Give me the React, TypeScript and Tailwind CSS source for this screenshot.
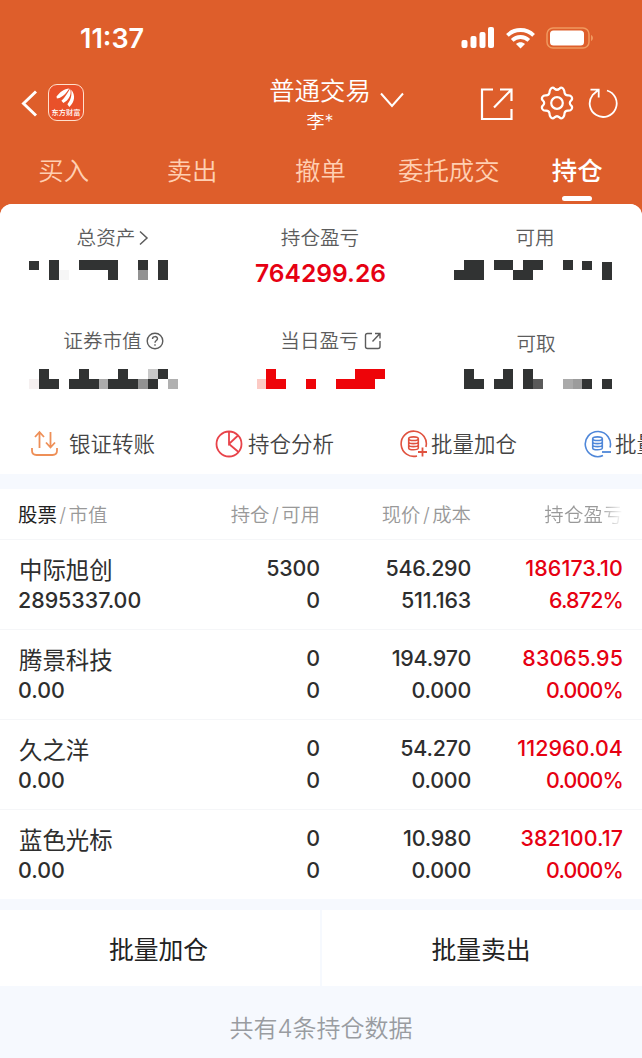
import { ReactNode } from 'react';

// [x, y, width, height, fill]
type Cell = [number, number, number, number, string?];

interface Holding {
  name: string;
  value: string;
  amount: string;
  available: string;
  price: string;
  cost: string;
  profit: string;
  percent: string;
}

const holdings: Holding[] = [
  { name: '中际旭创', value: '2895337.00', amount: '5300', available: '0', price: '546.290', cost: '511.163', profit: '186173.10', percent: '6.872%' },
  { name: '腾景科技', value: '0.00', amount: '0', available: '0', price: '194.970', cost: '0.000', profit: '83065.95', percent: '0.000%' },
  { name: '久之洋', value: '0.00', amount: '0', available: '0', price: '54.270', cost: '0.000', profit: '112960.04', percent: '0.000%' },
  { name: '蓝色光标', value: '0.00', amount: '0', available: '0', price: '10.980', cost: '0.000', profit: '382100.17', percent: '0.000%' },
];

const tabs = ['买入', '卖出', '撤单', '委托成交', '持仓'];

// masked amounts, drawn as coarse blocks
const totalMask: Cell[] = [
  [0, 1, 10, 9], [20, 0, 10, 20], [30, 10, 10, 10, '#f6f6f6'], [50, 0, 39, 10], [79, 10, 10, 10],
  [109, 0, 10, 10], [109, 10, 10, 10, '#929292'], [129, 0, 10, 20],
];
const marketMask: Cell[] = [
  [0, 10, 10, 10, '#f5f0f0'], [10, 0, 10, 20], [20, 10, 10, 10], [40, 10, 30, 10], [50, 0, 10, 10],
  [70, 10, 9, 10, '#ababab'], [79, 10, 30, 10], [89, 0, 10, 10], [109, 10, 10, 10, '#929292'],
  [119, 0, 10, 10, '#c9c9c9'], [119, 10, 10, 10], [129, 0, 10, 10], [139, 10, 10, 10, '#b0b0b0'],
];
const dayMask: Cell[] = [
  [0, 10, 9, 10, '#fccac4'], [9, 0, 10, 20], [19, 10, 10, 10], [49, 10, 10, 10], [79, 10, 39, 10], [98, 0, 30, 10],
];
const usableMask: Cell[] = [
  [0, 10, 30, 10], [10, 0, 20, 10], [40, 0, 19, 10], [59, 10, 20, 10], [69, 0, 20, 10],
  [109, 0, 10, 10], [128, 1, 10, 9], [148, 2, 10, 18],
];
const cashMask: Cell[] = [
  [0, 0, 10, 20], [10, 10, 10, 10], [30, 10, 10, 10], [39, 0, 10, 20], [59, 0, 10, 20], [69, 10, 10, 10, '#5a5a5a'],
  [99, 10, 10, 10, '#aaaaaa'], [109, 10, 9, 10, '#9c9c9c'], [118, 10, 10, 10], [138, 10, 10, 10],
];

function Mask({ cells, width, color = '#313333' }: { cells: Cell[]; width: number; color?: string }) {
  return (
    <svg width={width} height={20} shapeRendering="crispEdges" className="shrink-0">
      {cells.map(([x, y, w, h, fill], i) => (
        <rect key={i} x={x} y={y} width={w} height={h} fill={fill || color} />
      ))}
    </svg>
  );
}

function StatusBar() {
  return (
    <div className="flex h-[76px] items-center justify-between pr-[48px] pl-[80px] text-white">
      <span className="pt-px text-[27px] leading-8 font-semibold">11:37</span>
      <div className="flex items-center gap-[11px]">
        <svg width="34" height="22" viewBox="0 0 34 22" fill="currentColor">
          <rect x="0.5" y="13" width="6" height="8" rx="2" />
          <rect x="9.5" y="9" width="6" height="12" rx="2" />
          <rect x="18.5" y="5" width="6" height="16" rx="2" />
          <rect x="27" y="0" width="6" height="21" rx="2" />
        </svg>
        <svg width="29" height="21" viewBox="0 0 29 21" fill="none" stroke="currentColor" strokeWidth="3.8">
          <path d="M1.4 7.4C8.5 0.2 20.5 0.2 27.6 7.4" />
          <path d="M6.2 12.3C10.8 7.9 18.2 7.9 22.8 12.3" />
          <path d="M14.5 20.6L10 16C12.5 13.8 16.5 13.8 19 16Z" fill="currentColor" stroke="none" />
        </svg>
        <svg width="48" height="22" viewBox="0 0 48 22" fill="none">
          <rect x="1" y="1" width="42" height="20" rx="6" stroke="#f0995f" strokeWidth="1.5" />
          <rect x="4" y="3.5" width="34" height="15" rx="3.5" fill="#fff" />
          <path d="M45 8C47.6 9 47.6 13 45 14Z" fill="#f0995f" />
        </svg>
      </div>
    </div>
  );
}

function NavBar() {
  return (
    <div className="grid h-[66px] grid-cols-[269px_136px_1fr] text-white">
      <div className="flex items-start pt-[8px] pl-[21px]">
        <svg width="17" height="27" viewBox="0 0 17 27" className="mt-[6px]" fill="none" stroke="currentColor" strokeWidth="2.9">
          <path d="M15 1.5L2.5 13.5L15 25.5" />
        </svg>
        <div className="ml-[10px] flex h-[37px] w-9 flex-col items-center rounded-[9px] border border-[#ffe0cc] bg-[#e9512a]">
          <svg width="20" height="20" viewBox="0 0 20 20" className="mt-[3px] shrink-0" fill="#fff">
            <path d="M0.5 8.6C4 3.6 8 1 13.4 0.4C10.6 3.6 8.4 8.9 0.9 10.6Z" />
            <path d="M5.4 12.8C9 9.6 11.2 5.6 14 0.8C16.2 6.2 12.6 12.5 7.4 14.9Z" />
            <path d="M11.4 16.2C14.8 12 16 7.6 15.2 1.8C19.8 7 18.8 14 13.3 19Z" />
          </svg>
          <span className="font-['Noto_Sans_CJK_SC',sans-serif] text-[7.2px] leading-[9px] font-medium whitespace-nowrap">东方财富</span>
        </div>
      </div>
      <div className="flex items-start">
        <div className="w-[102px] text-center">
          <div className="text-[25.4px] leading-[30px] font-[350] whitespace-nowrap">普通交易</div>
          <div className="pt-px text-[18px] leading-[30px] font-[350]">李*</div>
        </div>
        <svg width="24" height="16" viewBox="0 0 24 16" className="mt-4 ml-[9px] shrink-0" fill="none" stroke="currentColor" strokeWidth="2">
          <path d="M1 1.5L12 14L23 1.5" />
        </svg>
      </div>
      <div className="flex items-start justify-end pt-[10px] pr-[23.5px]">
        <svg width="34" height="34" viewBox="0 0 34 34" className="mt-px" fill="none" stroke="currentColor" strokeWidth="2.2">
          <path d="M13 2.5H2V32H31.5V22M20 2.5H31.5V14M31 3L14 20.5" />
        </svg>
        <svg width="36" height="34" viewBox="0 0 36 34" className="ml-[25px]" fill="none" stroke="currentColor" strokeWidth="2.2" strokeLinejoin="round">
          <path d="M11.5 3.2C13 1 14.5 1.6 15.5 2.6C17 4 19 4 20.5 2.6C21.5 1.6 23 1 24.5 3.2C25.5 4.4 25.3 5.2 25.5 6.6C25.8 8.5 27.3 9.4 29.2 9.3C31 9.2 31.8 9.5 32.7 11C33.6 12.8 33.5 13.4 32 14.6C30.4 16 30.4 18 32 19.4C33.5 20.6 33.6 21.2 32.7 23C31.8 24.5 31 24.8 29.2 24.7C27.3 24.6 25.8 25.5 25.5 27.4C25.3 28.8 25.5 29.6 24.5 30.8C23 33 21.5 32.4 20.5 31.4C19 30 17 30 15.5 31.4C14.5 32.4 13 33 11.5 30.8C10.5 29.6 10.7 28.8 10.5 27.4C10.2 25.5 8.7 24.6 6.8 24.7C5 24.8 4.2 24.5 3.3 23C2.4 21.2 2.5 20.6 4 19.4C5.6 18 5.6 16 4 14.6C2.5 13.4 2.4 12.8 3.3 11C4.2 9.5 5 9.2 6.8 9.3C8.7 9.4 10.2 8.5 10.5 6.6C10.7 5.2 10.5 4.4 11.5 3.2Z" />
          <circle cx="18" cy="17" r="5.8" />
        </svg>
        <svg width="32" height="32" viewBox="0 0 32 32" className="ml-[12px] mt-[1px]" fill="none" stroke="currentColor" strokeWidth="1.8">
          <path d="M20 3.5A13.5 13.5 0 1 1 5.5 8.2L11.2 3M3.5 2.6H11.7V10.5" />
        </svg>
      </div>
    </div>
  );
}

function Stat({ label, icon, children }: { label: string; icon?: ReactNode; children: ReactNode }) {
  return (
    <div className="flex flex-col items-center">
      <div className="flex h-7 items-center text-[19.6px] leading-7 font-[350] whitespace-nowrap text-[#5c5c5c]">
        {label}
        {icon}
      </div>
      {children}
    </div>
  );
}

function StockDisc({ minus }: { minus?: boolean }) {
  return (
    <svg width="28" height="28" viewBox="0 0 28 28" fill="none" stroke="currentColor" strokeWidth="1.6">
      <path d={minus ? 'M26 17.5A12.6 12.6 0 1 0 19 25.6' : 'M25.9 17A12.6 12.6 0 1 0 17 25.9'} />
      <ellipse cx="13.5" cy="8.7" rx="4.8" ry="1.8" />
      <path d="M8.7 8.7V18C8.7 20.4 18.3 20.4 18.3 18V8.7M8.7 12C8.7 14.2 18.3 14.2 18.3 12M8.7 15C8.7 17.2 18.3 17.2 18.3 15" />
      <path d={minus ? 'M18 22H27' : 'M18 22H27M22.5 17.5V26.5'} strokeWidth="1.8" />
    </svg>
  );
}

function Shortcuts() {
  return (
    <div className="flex h-[67px] items-center overflow-hidden pt-[6px] pl-[30px] text-[21.5px] leading-8 font-[350] whitespace-nowrap text-[#444]">
      <div className="flex w-[185px] shrink-0 items-center gap-[10px]">
        <svg width="29" height="28" viewBox="0 0 29 28" fill="none" stroke="#ee8f57" strokeWidth="1.8">
          <path d="M2 18V20.5C2 23.5 3.5 25 6.5 25H22.5C25.5 25 27 23.5 27 20.5V18" />
          <path d="M9.5 18V3M5 7L9.5 2L14 7M20.5 2V17M16 12.5L20.5 17.5L25 12.5" />
        </svg>
        银证转账
      </div>
      <div className="flex w-[185px] shrink-0 items-center gap-[5px]">
        <svg width="28" height="28" viewBox="0 0 28 28" fill="none" stroke="#e8434a" strokeWidth="1.8">
          <circle cx="14" cy="14" r="12.5" />
          <path d="M14 1.5V14L23 5.5M14 14L23.5 22" />
        </svg>
        持仓分析
      </div>
      <div className="flex w-[184px] shrink-0 items-center gap-[3px]">
        <span className="text-[#e0523f]"><StockDisc /></span>
        批量加仓
      </div>
      <div className="flex shrink-0 items-center gap-[3px]">
        <span className="text-[#4f87d9]"><StockDisc minus /></span>
        批量
      </div>
    </div>
  );
}

export default function App() {
  return (
    <div className="h-[1058px] w-[642px] overflow-hidden bg-[#de5e2b] font-[Inter,'Noto_Sans_CJK_SC',sans-serif]">
      <StatusBar />
      <NavBar />
      <div className="-ml-[0.5px] flex h-[62px] pt-[11px] text-[25.4px] leading-[36px] whitespace-nowrap">
        {tabs.map((tab, i) => (
          <div key={tab} className="flex w-[128.4px] shrink-0 flex-col items-center">
            <span className={i === 4 ? 'font-medium text-white' : 'font-[350] text-[#ffcfb2]'}>{tab}</span>
            {i === 4 && <span className="mt-[7px] h-[5px] w-[30px] rounded-sm bg-white" />}
          </div>
        ))}
      </div>

      <div className="h-[854px] overflow-hidden rounded-t-xl bg-[#f6f9fe]">
        {/* account overview */}
        <div className="h-[270px] bg-white pt-[20px]">
          <div className="grid h-[103px] grid-cols-[228px_184px_230px]">
            <div className="pr-[2px]">
              <Stat
                label="总资产"
                icon={
                  <svg width="11" height="16" viewBox="0 0 11 16" className="ml-[3px]" fill="none" stroke="currentColor" strokeWidth="1.5">
                    <path d="M2 1.5L9 8L2 14.5" />
                  </svg>
                }
              >
                <div className="mt-[8px] mr-[29px]"><Mask cells={totalMask} width={139} /></div>
              </Stat>
            </div>
            <Stat label="持仓盈亏">
              <span className="mt-[4px] pl-px text-[24.6px] leading-[34px] font-semibold text-[#e60012]">764299.26</span>
            </Stat>
            <div className="pl-4">
              <Stat label="可用">
                <div className="mt-[8px] mr-[4px]"><Mask cells={usableMask} width={158} /></div>
              </Stat>
            </div>
          </div>
          <div className="grid h-[80px] grid-cols-[228px_184px_230px]">
            <div className="pr-px">
              <Stat
                label="证券市值"
                icon={
                  <svg width="18" height="18" viewBox="0 0 18 18" className="ml-1" fill="none" stroke="currentColor" strokeWidth="1.4">
                    <circle cx="9" cy="9" r="7.8" />
                    <path d="M6.5 7C6.5 3.8 11.5 3.8 11.5 6.8C11.5 8.6 9 8.6 9 10.8M9 12.2V13.8" />
                  </svg>
                }
              >
                <div className="mt-[14px] mr-[20px]"><Mask cells={marketMask} width={149} /></div>
              </Stat>
            </div>
            <div className="pl-[22px]">
              <Stat
                label="当日盈亏"
                icon={
                  <svg width="18" height="18" viewBox="0 0 18 18" className="ml-[5px]" fill="none" stroke="currentColor" strokeWidth="1.4">
                    <path d="M8 1.5H3.5Q1.5 1.5 1.5 3.5V14.5Q1.5 16.5 3.5 16.5H14Q16 16.5 16 14.5V9M11 1.5H16V6.5M16 1.5L8.5 9.5" />
                  </svg>
                }
              >
                <div className="mt-[14px] mr-[20px]"><Mask cells={dayMask} width={128} color="#ee0409" /></div>
              </Stat>
            </div>
            <div className="pt-[3px] pl-[18px]">
              <Stat label="可取">
                <div className="mt-[11px] ml-[4px]"><Mask cells={cashMask} width={148} /></div>
              </Stat>
            </div>
          </div>
          <Shortcuts />
        </div>

        {/* holdings */}
        <div className="mt-[15px] bg-white">
          <div className="grid h-[51px] grid-cols-[140px_180px_151px_152px] items-center border-b border-[#f5f6f8] pt-[3px] text-right text-[19.4px] font-[350] whitespace-nowrap text-[#999]">
            <div className="pl-[18px] text-left"><span className="font-normal text-[#222]">股票</span><span className="mx-[2.5px]">/</span>市值</div>
            <div>持仓<span className="mx-[2.5px]">/</span>可用</div>
            <div>现价<span className="mx-[2.5px]">/</span>成本</div>
            <div><span className="bg-linear-to-r from-[#999] from-70% to-white bg-clip-text tracking-[0.3px] text-transparent">持仓盈亏</span></div>
          </div>
          {holdings.map(h => (
            <div
              key={h.name}
              className="grid h-[90px] grid-cols-[190px_130px_151px_152px] border-b border-[#f5f6f8] pt-[12px] text-right text-[21.4px] leading-8 font-medium text-[#2e2e2e] last:h-[89px] last:border-0"
            >
              <div className="pl-[18px] text-left">
                <div className="pt-[5px] pl-px text-[23.4px] leading-[27px] font-normal">{h.name}</div>
                <div>{h.value}</div>
              </div>
              <div className="tracking-[-0.1px]">
                <div>{h.amount}</div>
                <div>{h.available}</div>
              </div>
              <div className="tracking-[-0.2px]">
                <div>{h.price}</div>
                <div>{h.cost}</div>
              </div>
              <div className="text-[#e60012]">
                <div className="tracking-[0.1px]">{h.profit}</div>
                <div className="tracking-[-0.8px]">{h.percent}</div>
              </div>
            </div>
          ))}
        </div>

        {/* batch actions */}
        <div className="mt-[11px] flex h-[76px] gap-[2px] text-[24.8px] leading-[76px] text-[#222]">
          <button className="flex h-[76px] w-[320px] items-start justify-center bg-white pt-[3px] pr-[3px] leading-[74px]">批量加仓</button>
          <button className="flex h-[76px] w-[320px] items-start justify-center bg-white pt-[3px] pr-[2px] leading-[74px]">批量卖出</button>
        </div>
        <div className="pt-[25px] text-center text-[24px] leading-9 font-[350] text-[#999ca1]">共有4条持仓数据</div>
      </div>
    </div>
  );
}
